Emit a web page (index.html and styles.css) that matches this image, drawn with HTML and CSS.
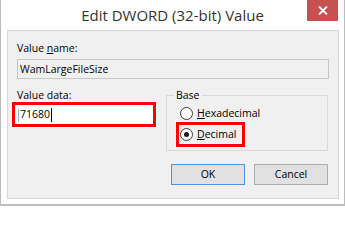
FILE: index.html
```html
<!DOCTYPE html>
<html>
<head>
<meta charset="utf-8">
<title>Edit DWORD (32-bit) Value</title>
<link rel="stylesheet" href="styles.css">
</head>
<body>
<div class="window">
  <div class="titlebar">
    <div class="title">Edit DWORD (32-bit) Value</div>
    <div class="close">
      <svg width="10" height="9" viewBox="0 0 10 9"><path d="M1 0.5 L9 8.5 M9 0.5 L1 8.5" stroke="#fff" stroke-width="1.8" fill="none"/></svg>
    </div>
  </div>
  <div class="panel">
    <div class="label name-label">Value <u>n</u>ame:</div>
    <div class="namebox">WamLargeFileSize</div>
    <div class="row2">
      <div class="leftcol">
        <div class="label data-label">Value data:</div>
        <div class="databox"><span class="edge"></span><span class="val">71680</span><span class="caret"></span></div>
      </div>
      <div class="rightcol">
        <fieldset class="base">
          <legend>Base</legend>
          <div class="radio-row hex"><span class="radio"></span><span class="rlabel"><u>H</u>exadecimal</span></div>
          <div class="radio-row dec"><span class="radio checked"></span><span class="rlabel"><u>D</u>ecimal</span></div>
        </fieldset>
        <div class="buttons">
          <div class="btn default">OK</div>
          <div class="btn">Cancel</div>
        </div>
      </div>
    </div>
  </div>
</div>
</body>
</html>
```
FILE: styles.css
```css
html {
  margin: 0;
  padding: 0;
  background: #fff;
}
body {
  margin: 0;
  padding: 0;
  background: #fff;
  width: 345px;
  height: 206px;
  overflow: hidden;
  font-family: "Open Sans", "Noto Sans", sans-serif;
  font-size: 10.5px;
  color: #000;
}
.window {
  box-sizing: border-box;
  height: 206px;
  border-left: 1px solid #bcbcbc;
  border-right: 1px solid #bcbcbc;
  border-bottom: 2px solid #bcbcbc;
  display: flex;
  flex-direction: column;
}
.titlebar {
  height: 30px;
  flex: none;
  display: grid;
  grid-template-columns: 1fr auto 1fr;
  align-items: start;
}
.title {
  grid-column: 2;
  font-size: 15px;
  line-height: 30px;
  color: #333;
  white-space: nowrap;
}
.close {
  grid-column: 3;
  justify-self: end;
  margin-right: 6px;
  width: 31px;
  height: 21px;
  background: #c75050;
  display: flex;
  align-items: center;
  justify-content: center;
}
.close svg { display: block; }
.panel {
  box-sizing: border-box;
  flex: none;
  height: 169px;
  margin: 0 5px 0 6px;
  border: 1px solid #d6d6d6;
  background: #f0f0f0;
  padding: 10px 0 0 0;
}
.label {
  line-height: 14px;
  height: 14px;
  white-space: nowrap;
}
.name-label {
  padding-left: 9px;
}
.namebox {
  box-sizing: border-box;
  margin: 4px 0 0 9px;
  width: 312px;
  height: 20px;
  border: 1px solid #c6c6c6;
  background: #f0f0f0;
  padding-left: 2px;
  line-height: 18px;
}
.row2 {
  display: flex;
  margin-top: 9px;
  padding-left: 4px;
  gap: 10px;
}
.leftcol {
  width: 144px;
  flex: none;
}
.data-label {
  padding-left: 5px;
}
.databox {
  box-sizing: border-box;
  width: 144px;
  height: 25px;
  border: 3px solid #f00;
  box-shadow: 0 0 0 1px #fff;
  background: #fff;
  display: flex;
  align-items: center;
  padding-left: 3px;
  line-height: 19px;
}
.edge {
  width: 1px;
  height: 13px;
  background: #8fb3d9;
  margin-right: 1px;
  margin-top: 1px;
}
.caret {
  width: 1px;
  height: 14px;
  background: #000;
  margin-left: 1px;
  margin-top: 1px;
}
.rightcol {
  width: 162px;
  flex: none;
}
.base {
  margin: 0;
  padding: 0 0 3px 0;
  border: 1px solid #dadada;
  min-width: 0;
}
.base legend {
  padding: 0 2px;
  margin-left: 7px;
  line-height: 14px;
}
.radio-row {
  display: flex;
  align-items: center;
  white-space: nowrap;
}
.radio-row.hex {
  margin: 5px 0 0 13px;
  height: 13px;
}
.radio-row.dec {
  box-sizing: border-box;
  margin: 2px 0 0 9px;
  width: 69px;
  height: 25px;
  border: 3px solid #f00;
  box-shadow: 0 0 0 1px #fff, inset 0 0 0 1px #fafafa;
  padding-left: 1px;
}
.radio {
  box-sizing: border-box;
  width: 13px;
  height: 13px;
  border: 1px solid #3a3a3a;
  border-radius: 50%;
  background: #fff;
  flex: none;
  display: flex;
  align-items: center;
  justify-content: center;
}
.radio.checked::after {
  content: "";
  width: 5px;
  height: 5px;
  border-radius: 50%;
  background: #1a1a1a;
}
.rlabel {
  margin-left: 4px;
  line-height: 13px;
}
.buttons {
  display: flex;
  justify-content: flex-end;
  gap: 9px;
  margin-top: 13px;
}
.btn {
  box-sizing: border-box;
  width: 74px;
  height: 21px;
  border: 1px solid #adadad;
  background: #e1e1e1;
  text-align: center;
  line-height: 19px;
}
.btn.default {
  border-color: #4a94e0;
}
```
